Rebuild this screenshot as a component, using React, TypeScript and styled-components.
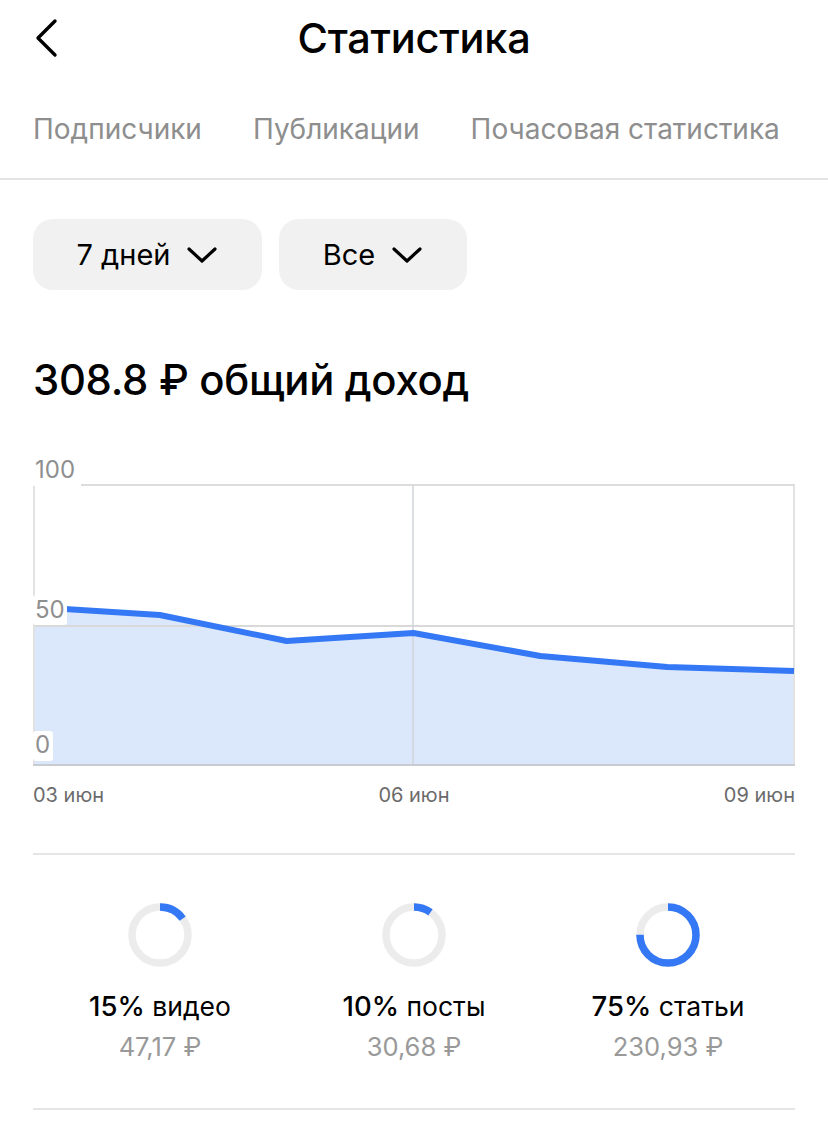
import React, { FC } from 'react';
import styled, { createGlobalStyle } from 'styled-components';

const GlobalStyle = createGlobalStyle`
  html, body {
    margin: 0;
    padding: 0;
    background: #ffffff;
  }
  body {
    font-family: Inter, 'Noto Sans', 'Liberation Sans', sans-serif;
    color: #000000;
  }
`;

const Page = styled('div')`
  width: 828px;
  min-height: 1136px;
  background: #ffffff;
`;

const Header = styled('header')`
  display: grid;
  grid-template-columns: 1fr auto 1fr;
  align-items: center;
  height: 76px;
  padding: 0 33px;
`;

const BackButton = styled('button')`
  justify-self: start;
  display: flex;
  align-items: center;
  padding: 0;
  border: 0;
  background: none;
`;

const Title = styled('h1')`
  margin: 0;
  font-size: 41.5px;
  font-weight: 500;
  letter-spacing: -0.2px;
`;

const Tabs = styled('nav')`
  display: flex;
  gap: 51px;
  height: 104px;
  align-items: center;
  padding: 0 33px;
  border-bottom: 2px solid #e3e3e3;
  box-sizing: border-box;
  white-space: nowrap;
  overflow: hidden;
`;

const Tab = styled('span')<{ active?: boolean }>`
  font-size: 28px;
  color: ${props => (props.active ? '#000000' : '#8e8e8e')};
  position: relative;
  top: 2px;
`;

const Content = styled('main')`
  padding: 39px 33px 0;
`;

const Filters = styled('div')`
  display: flex;
  gap: 17px;
`;

const Pill = styled('button')<{ w: number }>`
  display: flex;
  align-items: center;
  justify-content: center;
  gap: 16px;
  width: ${props => props.w}px;
  height: 71px;
  border: 0;
  border-radius: 20px;
  background: #f1f1f1;
  font-family: inherit;
  font-size: 29px;
  color: #000000;
  padding: 0;
`;

const Heading = styled('h2')`
  margin: 58px 0 0;
  font-size: 41.8px;
  font-weight: 500;
  line-height: 64px;
  letter-spacing: -0.3px;
`;

const ChartBox = styled('div')`
  margin-top: 42px;
  width: 762px;
`;

const AxisRow = styled('div')`
  display: flex;
  justify-content: space-between;
  margin-top: 12px;
  font-size: 20px;
  color: #6b6b6b;
`;

const Divider = styled('hr')<{ gap?: number }>`
  margin: ${props => props.gap || 0}px 0 0;
  border: 0;
  border-top: 2px solid #e5e5e5;
`;

const Shares = styled('div')`
  display: grid;
  grid-template-columns: repeat(3, 1fr);
  padding: 47px 0 46px;
`;

const Share = styled('div')`
  display: flex;
  flex-direction: column;
  align-items: center;
`;

const ShareLabel = styled('div')`
  margin-top: 21px;
  font-size: 26.5px;
  color: #000000;
  b {
    font-weight: 500;
    font-size: 27.5px;
  }
`;

const ShareValue = styled('div')`
  margin-top: 8px;
  font-size: 25.5px;
  color: #999999;
`;

const Chevron: FC = () => (
  <svg width="32" height="20" viewBox="0 0 32 20">
    <path d="M3 4 L16 16 L29 4" fill="none" stroke="#000" strokeWidth="3.2" strokeLinecap="round" strokeLinejoin="round" />
  </svg>
);

const BackIcon: FC = () => (
  <svg width="26" height="40" viewBox="0 0 26 40">
    <path d="M22 3 L5 20 L22 37" fill="none" stroke="#000" strokeWidth="3.4" strokeLinecap="round" strokeLinejoin="round" />
  </svg>
);

const Donut: FC<{ percent: number }> = ({ percent }) => {
  const r = 28;
  const c = 2 * Math.PI * r;
  return (
    <svg width="66" height="66" viewBox="0 0 66 66">
      <circle cx="33" cy="33" r={r} fill="none" stroke="#ececec" strokeWidth="7.5" />
      <circle
        cx="33"
        cy="33"
        r={r}
        fill="none"
        stroke="#3478f6"
        strokeWidth="7.5"
        strokeDasharray={`${(c * percent) / 100} ${c}`}
        transform="rotate(-90 33 33)"
      />
    </svg>
  );
};

// values taken as y offsets inside the plot (0 = top line, 280 = baseline)
const points = [122, 130, 156, 148, 171, 182, 186];

const Chart: FC = () => {
  const top = 31;
  const w = 762;
  const h = 280;
  const step = (w - 1) / (points.length - 1);
  const coords = points.map((p, i) => `${(i * step).toFixed(1)},${top + p}`);
  const line = coords.join(' ');
  const area = `0,${top + h} ${line} ${w},${top + h}`;
  return (
    <svg width={w} height={top + h + 2} viewBox={`0 0 ${w} ${top + h + 2}`}>
      <polygon points={area} fill="#dbe8fb" />
      <line x1="0" y1={top} x2={w} y2={top} stroke="#dcdcdc" strokeWidth="2" />
      <line x1="0" y1={top + 141} x2={w} y2={top + 141} stroke="#d9d9d9" strokeWidth="2" />
      <line x1="1" y1={top} x2="1" y2={top + h} stroke="#e2e2e2" strokeWidth="2" />
      <line x1={w - 1} y1={top} x2={w - 1} y2={top + h} stroke="#e2e2e2" strokeWidth="2" />
      <line x1="380" y1={top} x2="380" y2={top + h} stroke="#cfd4da" strokeWidth="1.5" />
      <line x1="0" y1={top + h} x2={w} y2={top + h} stroke="#c8ccd1" strokeWidth="2" />
      <polyline points={line} fill="none" stroke="#3478f6" strokeWidth="6" strokeLinejoin="round" />
      <rect x="0" y="2" width="48" height="30" fill="#ffffff" />
      <text x="2" y="24" fontSize="24" fill="#8f8f8f" fontFamily="Inter, sans-serif">100</text>
      <rect x="0" y={top + 110} width="34" height="30" rx="3" fill="#ffffff" />
      <text x="2" y={top + 133} fontSize="24" fill="#8f8f8f" fontFamily="Inter, sans-serif">50</text>
      <rect x="0" y={top + 246} width="20" height="30" rx="3" fill="#ffffff" />
      <text x="2" y={top + 268} fontSize="24" fill="#8f8f8f" fontFamily="Inter, sans-serif">0</text>
    </svg>
  );
};

const shares = [
  { percent: 15, label: 'видео', value: '47,17 ₽' },
  { percent: 10, label: 'посты', value: '30,68 ₽' },
  { percent: 75, label: 'статьи', value: '230,93 ₽' },
];

const App: FC = () => (
  <Page>
    <GlobalStyle />
    <Header>
      <BackButton>
        <BackIcon />
      </BackButton>
      <Title>Статистика</Title>
      <span />
    </Header>
    <Tabs>
      <Tab>Подписчики</Tab>
      <Tab>Публикации</Tab>
      <Tab>Почасовая статистика</Tab>
    </Tabs>
    <Content>
      <Filters>
        <Pill w={229}>
          7 дней <Chevron />
        </Pill>
        <Pill w={188}>
          Все <Chevron />
        </Pill>
      </Filters>
      <Heading>308.8 ₽ общий доход</Heading>
      <ChartBox>
        <Chart />
        <AxisRow>
          <span>03 июн</span>
          <span>06 июн</span>
          <span>09 июн</span>
        </AxisRow>
      </ChartBox>
      <Divider gap={46} />
      <Shares>
        {shares.map(s => (
          <Share key={s.label}>
            <Donut percent={s.percent} />
            <ShareLabel>
              <b>{s.percent}%</b> {s.label}
            </ShareLabel>
            <ShareValue>{s.value}</ShareValue>
          </Share>
        ))}
      </Shares>
      <Divider />
    </Content>
  </Page>
);

export default App;
